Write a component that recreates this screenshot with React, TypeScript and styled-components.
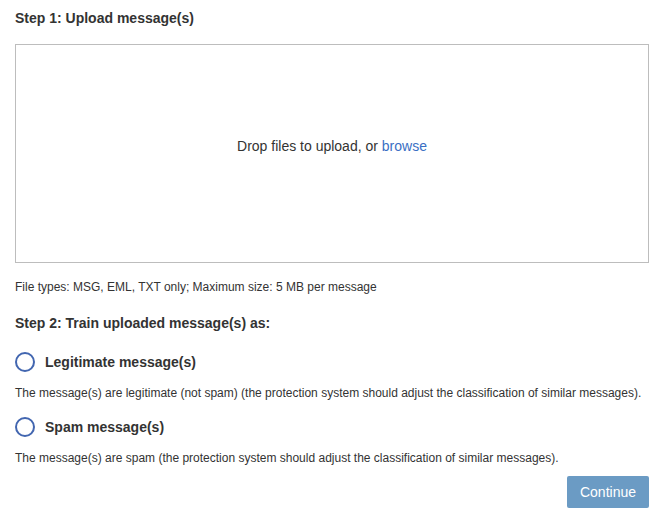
import React, { useState } from 'react';
import styled, { createGlobalStyle } from 'styled-components';

const GlobalStyle = createGlobalStyle`
  body {
    margin: 0;
    background: #ffffff;
    font-family: 'Liberation Sans', Arial, Helvetica, sans-serif;
    color: #333333;
  }
`;

type Kind = 'legit' | 'spam';

const options: { id: Kind; label: string; note: string }[] = [
  {
    id: 'legit',
    label: 'Legitimate message(s)',
    note:
      'The message(s) are legitimate (not spam) (the protection system should adjust the classification of similar messages).',
  },
  {
    id: 'spam',
    label: 'Spam message(s)',
    note: 'The message(s) are spam (the protection system should adjust the classification of similar messages).',
  },
];

export default function App() {
  const [kind, setKind] = useState<Kind | null>(null);

  return (
    <Page>
      <GlobalStyle />
      <Heading>Step 1: Upload message(s)</Heading>
      <DropZone>
        Drop files to upload, or&nbsp;<BrowseLink href="#">browse</BrowseLink>
      </DropZone>
      <Hint>File types: MSG, EML, TXT only; Maximum size: 5 MB per message</Hint>

      <Heading $top={20}>Step 2: Train uploaded message(s) as:</Heading>
      <Options>
        {options.map((opt) => (
          <Option key={opt.id}>
            <RadioRow onClick={() => setKind(opt.id)}>
              <Radio $checked={kind === opt.id} />
              <RadioLabel>{opt.label}</RadioLabel>
            </RadioRow>
            <Note>{opt.note}</Note>
          </Option>
        ))}
      </Options>

      <Footer>
        <ContinueButton disabled={!kind}>Continue</ContinueButton>
      </Footer>
    </Page>
  );
}

const Page = styled.div`
  padding: 10px 16px 8px 15px;
  display: flex;
  flex-direction: column;
`;

const Heading = styled.h2<{ $top?: number }>`
  margin: ${(p) => p.$top ?? 0}px 0 0;
  font-size: 14px;
  font-weight: bold;
  line-height: 17px;
  color: #333333;
`;

const DropZone = styled.div`
  box-sizing: border-box;
  margin-top: 17px;
  height: 219px;
  padding-bottom: 15px;
  border: 1px solid #bdbdbd;
  display: flex;
  align-items: center;
  justify-content: center;
  font-size: 14px;
  color: #333333;
`;

const BrowseLink = styled.a`
  color: #3a6fc4;
  text-decoration: none;
`;

const Hint = styled.p`
  margin: 17px 0 0;
  font-size: 12px;
  line-height: 15px;
  color: #333333;
`;

const Options = styled.div`
  display: flex;
  flex-direction: column;
  gap: 16px;
  margin-top: 20px;
`;

const Option = styled.div`
  display: flex;
  flex-direction: column;
`;

const RadioRow = styled.label`
  display: flex;
  align-items: center;
  gap: 10px;
  cursor: pointer;
`;

const Radio = styled.span<{ $checked: boolean }>`
  box-sizing: border-box;
  width: 20px;
  height: 20px;
  border-radius: 50%;
  border: 2px solid #4266b0;
  background: ${(p) => (p.$checked ? 'radial-gradient(#4266b0 0 4px, #fff 5px)' : '#fff')};
`;

const RadioLabel = styled.span`
  font-size: 14px;
  font-weight: bold;
  color: #333333;
`;

const Note = styled.p`
  margin: 14px 0 0;
  font-size: 12px;
  line-height: 15px;
  color: #333333;
`;

const Footer = styled.div`
  display: flex;
  justify-content: flex-end;
  margin-top: 10px;
`;

const ContinueButton = styled.button`
  width: 82px;
  height: 32px;
  border: none;
  border-radius: 2px;
  background: #6b9bc4;
  color: #ffffff;
  font-family: inherit;
  font-size: 14px;
  cursor: pointer;

  &:disabled {
    cursor: default;
  }
`;
